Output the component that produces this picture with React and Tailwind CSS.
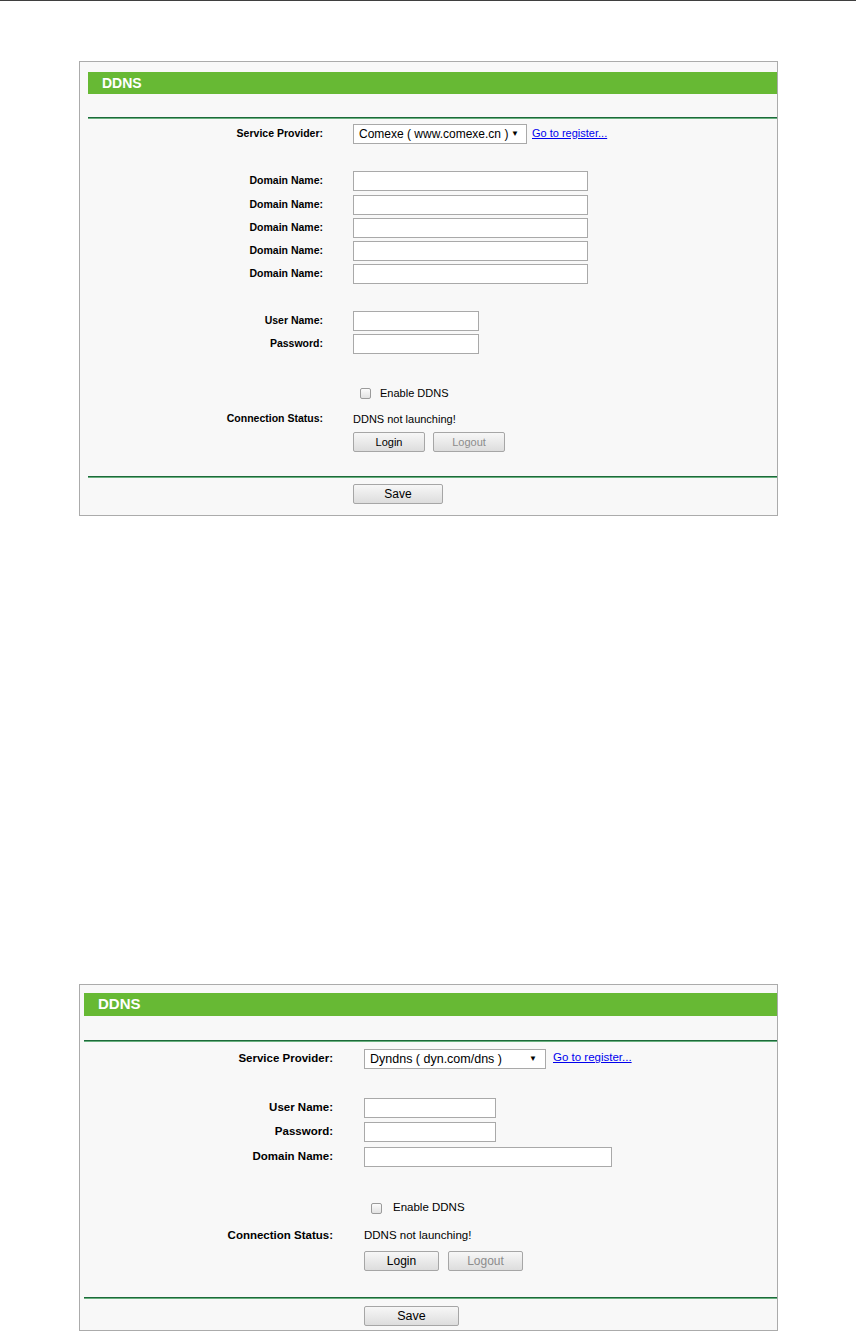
import React from "react";

const Divider = ({ className = "" }) => (
  <div className={className}>
    <div className="h-px bg-[#1c6a3a]" />
    <div className="h-px bg-[#69b07f]" />
  </div>
);

const Input = ({ className = "" }) => (
  <div className={`h-[20px] border border-[#a9a9a9] bg-white ${className}`} />
);

const Button = ({ children, className = "", disabled = false }) => (
  <div
    className={`flex h-[20px] items-center justify-center rounded-[2px] border border-[#a6a6a6] bg-gradient-to-b from-[#f7f7f7] to-[#dddddd] ${
      disabled ? "text-[#8c8c8c]" : "text-black"
    } ${className}`}
  >
    {children}
  </div>
);

const Checkbox = () => (
  <div className="h-[11px] w-[11px] rounded-[2px] border border-[#9b9b9b] bg-gradient-to-b from-[#fcfcfc] to-[#e2e2e2]" />
);

// first screenshot: Comexe provider, five domain fields
const ComexePanel = () => (
  <div className="ml-[79px] mt-[60px] w-[699px] border border-[#ababab] bg-[#f8f8f8] pb-[11px] pl-[8px] pt-[10px] text-[11px] text-black">
    <div className="flex h-[22px] items-center bg-[#67b934] pl-[14px] text-[14px] font-bold text-white">
      DDNS
    </div>
    <Divider className="mt-[23px]" />

    <div className="mt-[5px] flex items-center">
      <div className="w-[235px] text-right text-[10.5px] font-bold">Service Provider:</div>
      <div className="ml-[30px] flex h-[20px] w-[174px] items-center justify-between border border-[#a9a9a9] bg-white pl-[5px] pr-[7px] text-[12px]">
        <span>Comexe ( www.comexe.cn )</span>
        <span className="text-[8px]">▼</span>
      </div>
      <a className="ml-[5px] -mt-[2px] text-[#0000ee] underline">Go to register...</a>
    </div>

    {["mt-[27px]", "mt-[4px]", "mt-[3px]", "mt-[3px]", "mt-[3px]"].map((mt, i) => (
      <div key={i} className={`${mt} flex items-center`}>
        <div className="w-[235px] text-right text-[10.5px] font-bold">Domain Name:</div>
        <Input className="ml-[30px] w-[235px]" />
      </div>
    ))}

    <div className="mt-[27px] flex items-center">
      <div className="w-[235px] text-right text-[10.5px] font-bold">User Name:</div>
      <Input className="ml-[30px] w-[126px]" />
    </div>
    <div className="mt-[3px] flex items-center">
      <div className="w-[235px] text-right text-[10.5px] font-bold">Password:</div>
      <Input className="ml-[30px] w-[126px]" />
    </div>

    <div className="mt-[29px] flex h-[20px] items-center pl-[272px]">
      <Checkbox />
      <span className="ml-[9px]">Enable DDNS</span>
    </div>
    <div className="mt-[6px] flex h-[20px] items-center">
      <div className="w-[235px] text-right text-[10.5px] font-bold">Connection Status:</div>
      <div className="ml-[30px]">DDNS not launching!</div>
    </div>
    <div className="mt-[3px] flex pl-[265px]">
      <Button className="w-[72px]">Login</Button>
      <Button className="ml-[8px] w-[72px]" disabled>
        Logout
      </Button>
    </div>

    <Divider className="mt-[24px]" />
    <div className="mt-[6px] flex pl-[265px]">
      <Button className="w-[90px] text-[12px]">Save</Button>
    </div>
  </div>
);

// second screenshot: Dyndns provider, one domain field
const DyndnsPanel = () => (
  <div className="ml-[79px] mt-[468px] w-[699px] border border-[#ababab] bg-[#f8f8f8] pb-[4px] pl-[4px] pt-[8px] text-[11.5px] text-black">
    <div className="flex h-[23px] items-center bg-[#67b934] pl-[14px] text-[15px] font-bold text-white">
      DDNS
    </div>
    <Divider className="mt-[24px]" />

    <div className="mt-[7px] flex items-center">
      <div className="w-[249px] text-right font-bold">Service Provider:</div>
      <div className="ml-[31px] flex h-[20px] w-[182px] items-center justify-between border border-[#a9a9a9] bg-white pl-[5px] pr-[8px] text-[12.5px]">
        <span>Dyndns ( dyn.com/dns )</span>
        <span className="text-[8px]">▼</span>
      </div>
      <a className="ml-[7px] -mt-[2px] text-[#0000ee] underline">Go to register...</a>
    </div>

    <div className="mt-[29px] flex items-center">
      <div className="w-[249px] text-right font-bold">User Name:</div>
      <Input className="ml-[31px] w-[132px]" />
    </div>
    <div className="mt-[4px] flex items-center">
      <div className="w-[249px] text-right font-bold">Password:</div>
      <Input className="ml-[31px] w-[132px]" />
    </div>
    <div className="mt-[5px] flex items-center">
      <div className="w-[249px] text-right font-bold">Domain Name:</div>
      <Input className="ml-[31px] w-[248px]" />
    </div>

    <div className="mt-[31px] flex h-[20px] items-center pl-[287px]">
      <Checkbox />
      <span className="ml-[11px]">Enable DDNS</span>
    </div>
    <div className="mt-[8px] flex h-[20px] items-center">
      <div className="w-[249px] text-right font-bold">Connection Status:</div>
      <div className="ml-[31px]">DDNS not launching!</div>
    </div>
    <div className="mt-[5px] flex pl-[280px]">
      <Button className="w-[75px] text-[12px]">Login</Button>
      <Button className="ml-[9px] w-[75px] text-[12px]" disabled>
        Logout
      </Button>
    </div>

    <Divider className="mt-[26px]" />
    <div className="mt-[7px] flex pl-[280px]">
      <Button className="w-[95px] text-[12.5px]">Save</Button>
    </div>
  </div>
);

export default function App() {
  return (
    <div className="min-h-[1332px] w-[856px] bg-white font-['Liberation_Sans',Arial,sans-serif]">
      <div className="h-px bg-[#3f3f3f]" />
      <ComexePanel />
      <DyndnsPanel />
    </div>
  );
}
